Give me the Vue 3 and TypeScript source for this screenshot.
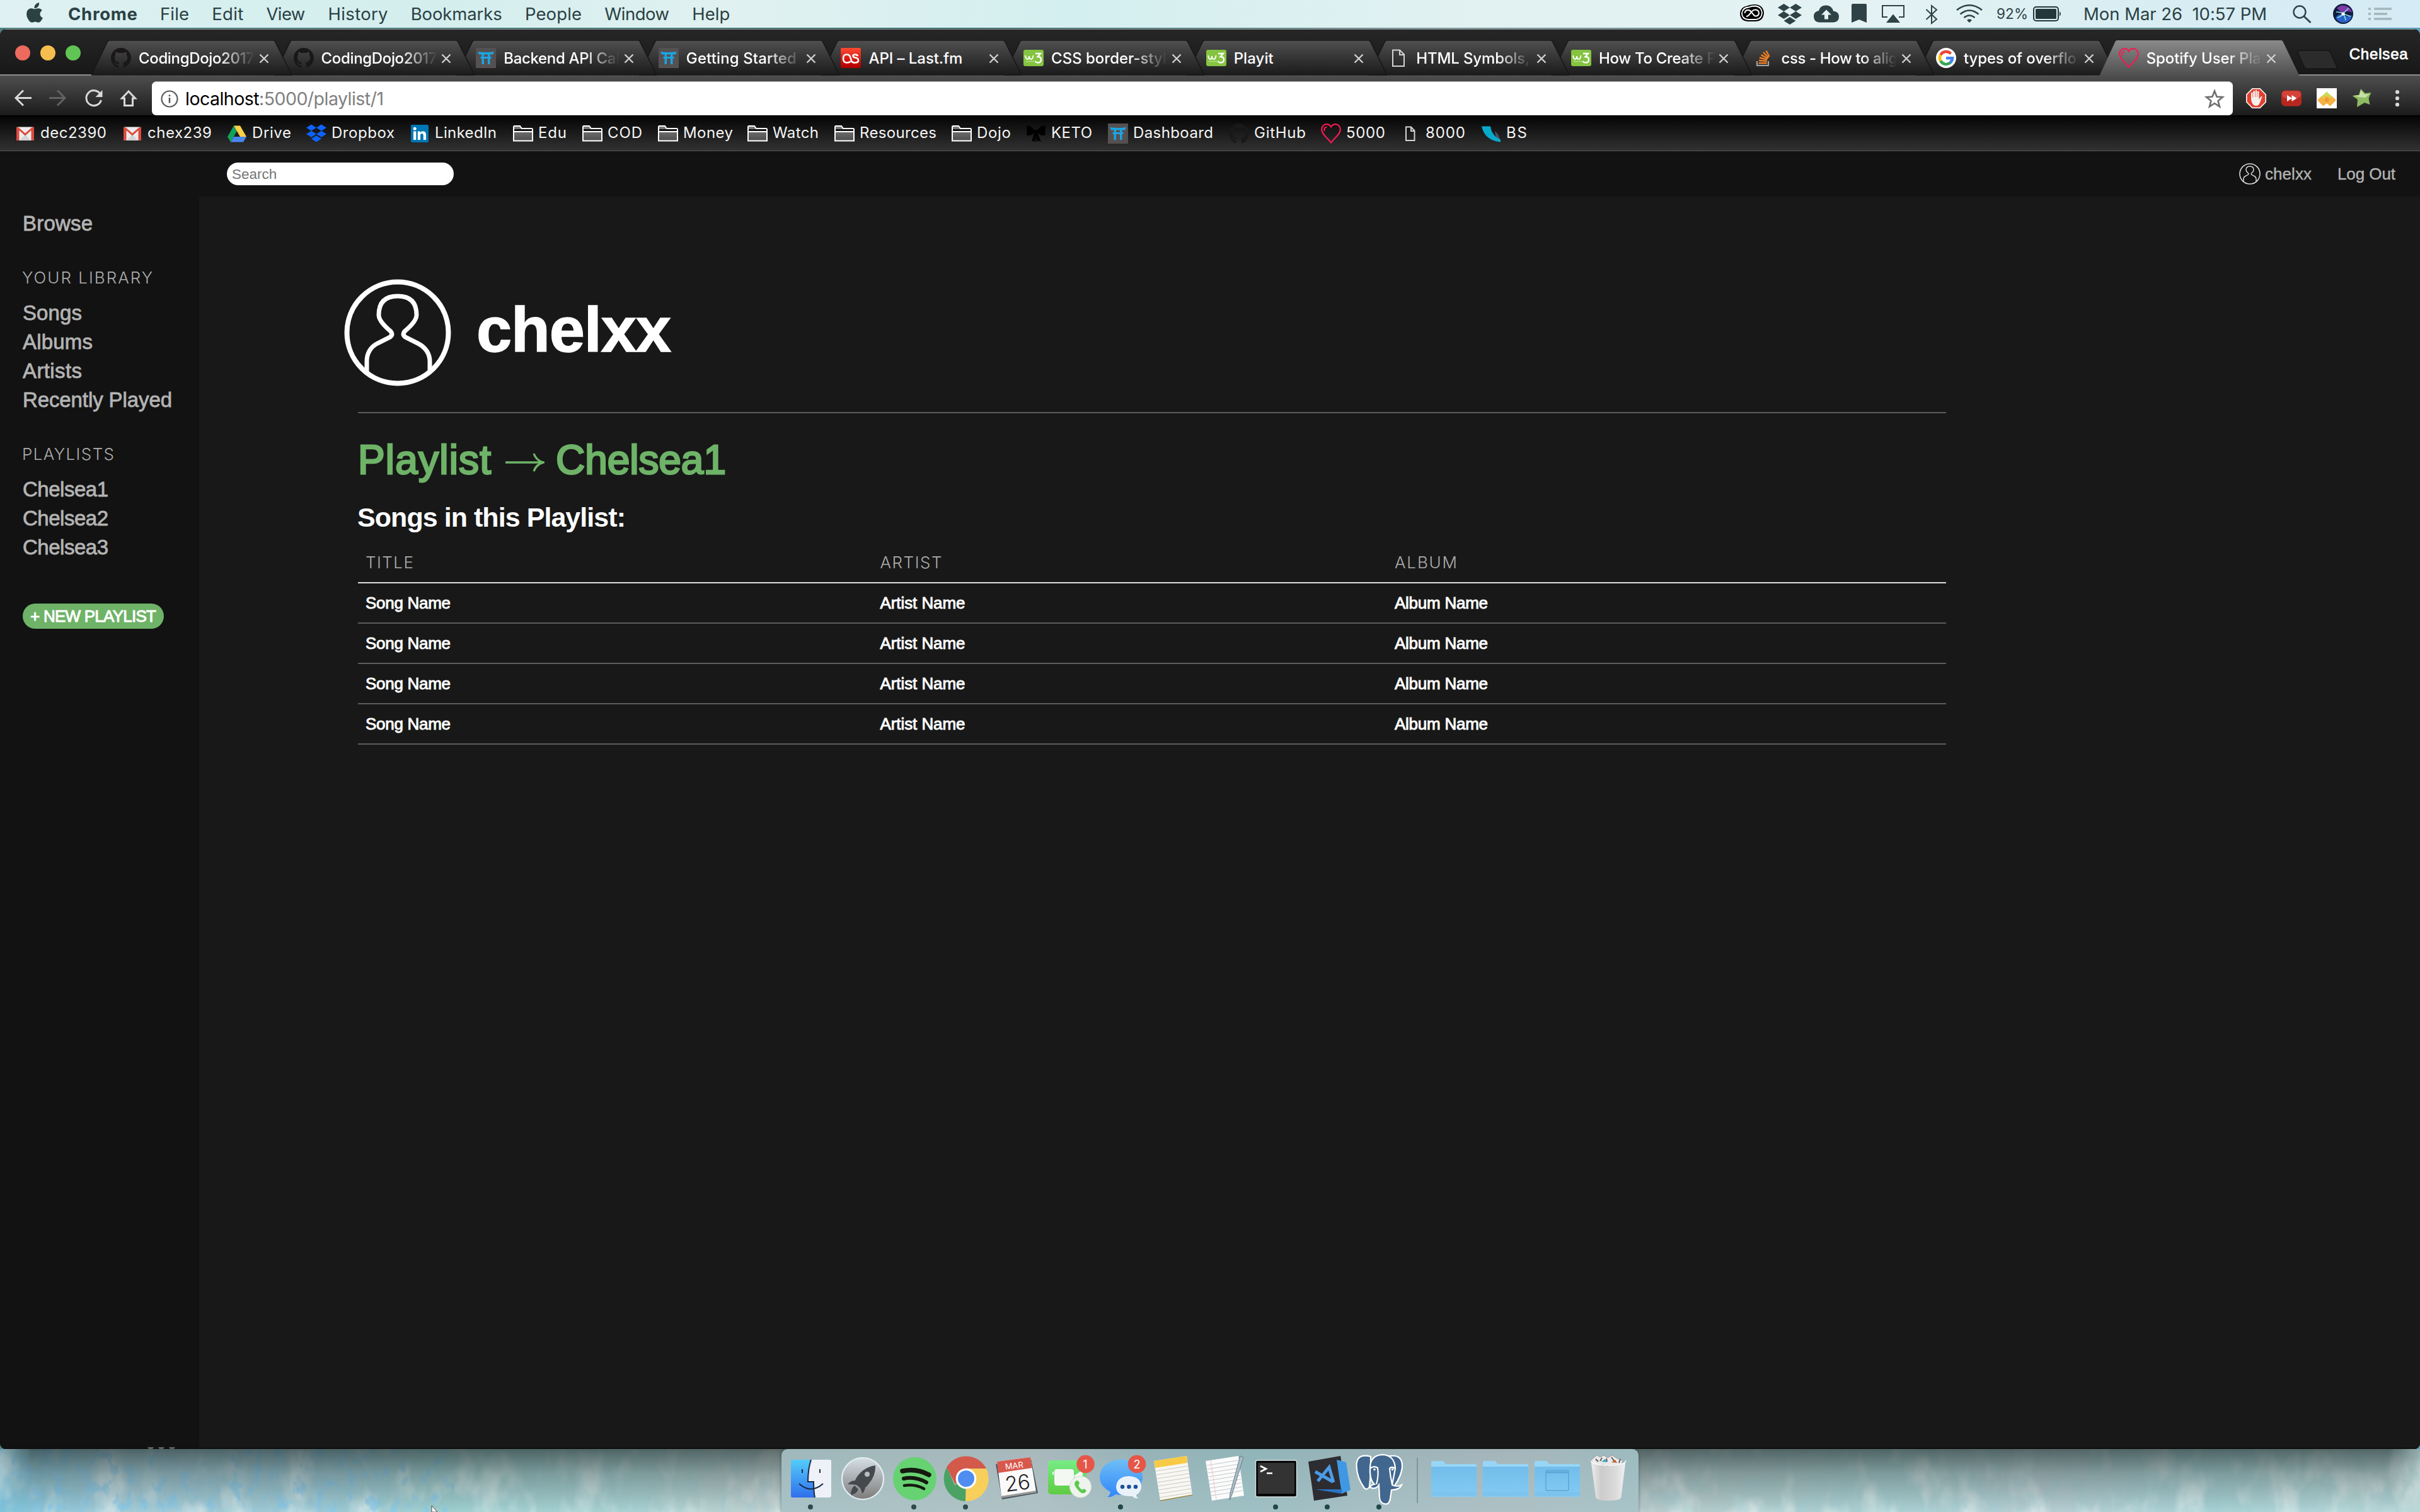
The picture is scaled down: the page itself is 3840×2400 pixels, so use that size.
<script setup lang="ts">
import type { Directive } from 'vue'

// Spreads the letters of a label so that it fills the given width.
const vFit: Directive<HTMLElement, number> = {
  mounted(el, binding) {
    el.style.letterSpacing = '0px'
    const natural = el.getBoundingClientRect().width
    const count = (el.textContent ?? '').length
    el.style.letterSpacing = `${(binding.value - natural) / Math.max(1, count - 1)}px`
    el.style.width = `${binding.value}px`
  },
}

interface Label { text: string; w: number }
interface Tab { icon: string; title: string; w: number; fade?: boolean; active?: boolean }
interface Bookmark { icon: string; text: string; w: number; pitch: number }

const menus: Label[] = [
  { text: 'File', w: 46 },
  { text: 'Edit', w: 50 },
  { text: 'View', w: 62 },
  { text: 'History', w: 95 },
  { text: 'Bookmarks', w: 145 },
  { text: 'People', w: 90 },
  { text: 'Window', w: 103 },
  { text: 'Help', w: 60 },
]

const tabs: Tab[] = [
  { icon: 'github', title: 'CodingDojo2017', w: 184, fade: true },
  { icon: 'github', title: 'CodingDojo2017', w: 184, fade: true },
  { icon: 'torii', title: 'Backend API Cal', w: 184, fade: true },
  { icon: 'torii', title: 'Getting Started', w: 175, fade: true },
  { icon: 'lastfm', title: 'API – Last.fm', w: 149 },
  { icon: 'w3', title: 'CSS border-styl', w: 183, fade: true },
  { icon: 'w3', title: 'Playit', w: 63 },
  { icon: 'page', title: 'HTML Symbols,', w: 180, fade: true },
  { icon: 'w3', title: 'How To Create P', w: 187, fade: true },
  { icon: 'stack', title: 'css - How to alig', w: 185, fade: true },
  { icon: 'google', title: 'types of overflo', w: 179, fade: true },
  { icon: 'heart', title: 'Spotify User Pla', w: 182, fade: true, active: true },
]

const bookmarks: Bookmark[] = [
  { icon: 'gmail', text: 'dec2390', w: 105, pitch: 170 },
  { icon: 'gmail', text: 'chex239', w: 102, pitch: 166 },
  { icon: 'drive', text: 'Drive', w: 62, pitch: 126 },
  { icon: 'dropbox', text: 'Dropbox', w: 100, pitch: 164 },
  { icon: 'linkedin', text: 'LinkedIn', w: 98, pitch: 164 },
  { icon: 'folder', text: 'Edu', w: 45, pitch: 110 },
  { icon: 'folder', text: 'COD', w: 55, pitch: 120 },
  { icon: 'folder', text: 'Money', w: 79, pitch: 142 },
  { icon: 'folder', text: 'Watch', w: 73, pitch: 138 },
  { icon: 'folder', text: 'Resources', w: 122, pitch: 186 },
  { icon: 'folder', text: 'Dojo', w: 54, pitch: 118 },
  { icon: 'bow', text: 'KETO', w: 65, pitch: 130 },
  { icon: 'torii', text: 'Dashboard', w: 127, pitch: 192 },
  { icon: 'githubDark', text: 'GitHub', w: 82, pitch: 146 },
  { icon: 'heart', text: '5000', w: 62, pitch: 126 },
  { icon: 'pageSmall', text: '8000', w: 63, pitch: 128 },
  { icon: 'bs', text: 'BS', w: 33, pitch: 100 },
]

const library: Label[] = [
  { text: 'Songs', w: 94 },
  { text: 'Albums', w: 111 },
  { text: 'Artists', w: 94 },
  { text: 'Recently Played', w: 237 },
]

const playlists: Label[] = [
  { text: 'Chelsea1', w: 136 },
  { text: 'Chelsea2', w: 136 },
  { text: 'Chelsea3', w: 136 },
]

const columns: Label[] = [
  { text: 'TITLE', w: 76 },
  { text: 'ARTIST', w: 98 },
  { text: 'ALBUM', w: 99 },
]

const rows: Label[][] = Array.from({ length: 4 }, () => [
  { text: 'Song Name', w: 135 },
  { text: 'Artist Name', w: 135 },
  { text: 'Album Name', w: 148 },
])
</script>

<template>
  <div class="desktop">
    <!-- shared icon shapes -->
    <svg class="defs" width="0" height="0">
      <defs>
        <linearGradient id="tabFill" x1="0" y1="0" x2="0" y2="1">
          <stop offset="0" stop-color="#505050" /><stop offset=".5" stop-color="#353535" /><stop offset="1" stop-color="#1b1b1b" />
        </linearGradient>
        <linearGradient id="tabActive" x1="0" y1="0" x2="0" y2="1">
          <stop offset="0" stop-color="#8a8a8a" /><stop offset="1" stop-color="#4e4e4e" />
        </linearGradient>
        <linearGradient id="lfm" x1="0" y1="0" x2="0" y2="1">
          <stop offset="0" stop-color="#ff4a32" /><stop offset=".75" stop-color="#c80a08" /><stop offset="1" stop-color="#a00" />
        </linearGradient>
        <linearGradient id="folderFill" x1="0" y1="0" x2="0" y2="1">
          <stop offset="0" stop-color="#7f7f7f" /><stop offset="1" stop-color="#4d4d4d" />
        </linearGradient>
        <symbol id="githubMark" viewBox="0 0 16 16">
          <path d="M8 0C3.58 0 0 3.58 0 8c0 3.54 2.29 6.53 5.47 7.59.4.07.55-.17.55-.38 0-.19-.01-.82-.01-1.49-2.01.37-2.53-.49-2.69-.94-.09-.23-.48-.94-.82-1.13-.28-.15-.68-.52-.01-.53.63-.01 1.08.58 1.23.82.72 1.21 1.87.87 2.33.66.07-.52.28-.87.51-1.07-1.78-.2-3.64-.89-3.64-3.95 0-.87.31-1.59.82-2.15-.08-.2-.36-1.02.08-2.12 0 0 .67-.21 2.2.82.64-.18 1.32-.27 2-.27s1.36.09 2 .27c1.53-1.04 2.2-.82 2.2-.82.44 1.1.16 1.92.08 2.12.51.56.82 1.27.82 2.15 0 3.07-1.87 3.75-3.65 3.95.29.25.54.73.54 1.48 0 1.07-.01 1.93-.01 2.2 0 .21.15.46.55.38A8.01 8.01 0 0 0 16 8c0-4.42-3.58-8-8-8z" />
        </symbol>
        <symbol id="github" viewBox="0 0 32 32"><use href="#githubMark" width="32" height="32" fill="#191717" /></symbol>
        <symbol id="githubDark" viewBox="0 0 32 32"><use href="#githubMark" width="32" height="32" fill="#191919" /></symbol>
        <symbol id="torii" viewBox="0 0 32 32">
          <rect width="32" height="32" fill="#555052" />
          <path d="M3 6q13 2 26 0l-2 4.500H5zM7.500 14h17v3h-17zM9.500 10h3.500v16H9.500zM19 10h3.500v16H19z" fill="#1ba5e0" />
        </symbol>
        <symbol id="lastfm" viewBox="0 0 32 32">
          <rect width="32" height="32" rx="2" fill="url(#lfm)" />
          <path d="M15.500 21.500q-2 2-5.500 2-6 0-6-6.700T10 10.500q4 0 5.500 5l1.500 5q1 3 5.800 3 5.200 0 5.200-4 0-3-4-3.700-4.500-.8-4.500-3t3.500-2.300q3 0 4 2.500" fill="none" stroke="#fff" stroke-width="2.600" />
        </symbol>
        <symbol id="w3" viewBox="0 0 32 32">
          <rect y="3" width="32" height="26" rx="3" fill="#85c441" />
          <path d="M3 12q1 6 3.500 6 2 0 2.500-5 .5 5 3 5 3 0 3.500-6" fill="none" stroke="#fff" stroke-width="1.900" />
          <path d="M19 9h8l-4.500 5q5.500 0 5.500 4.500 0 5-5 5-3 0-4.500-2.500" fill="none" stroke="#fff" stroke-width="2.300" />
          <path d="M4 21.500h13" stroke="#cfe8b0" stroke-width="1.600" stroke-dasharray="1.500 .7" />
        </symbol>
        <symbol id="page" viewBox="0 0 32 32">
          <path d="M7 3.500h11l7 7v18.500H7zM18 3.500v7.500h7" fill="none" stroke="#d4d4d4" stroke-width="2" />
        </symbol>
        <symbol id="pageSmall" viewBox="0 0 32 32">
          <path d="M9 5.500h8l5.500 6v15.500H9zM17 5.500v6.500h5.500" fill="none" stroke="#d4d4d4" stroke-width="2" />
        </symbol>
        <symbol id="stack" viewBox="0 0 32 32">
          <path d="M6 21v7h18v-7" fill="none" stroke="#a0a4a8" stroke-width="2.200" />
          <path d="M8.500 24.300h13M9 20l12.700 1.200M10 15.500l12 3.200M12.500 11l10.700 6M16 7l8.200 8.500M20.500 4.500l5 9.500" fill="none" stroke="#ef7f24" stroke-width="2.500" />
        </symbol>
        <symbol id="google" viewBox="0 0 32 32">
          <circle cx="16" cy="16" r="16" fill="#fff" />
          <g fill="none" stroke-width="4.600">
            <path d="M23.500 9.200A10 10 0 0 0 7.300 11.300" stroke="#ea4335" />
            <path d="M7.300 11.300A10 10 0 0 0 7.300 20.700" stroke="#fbbc05" />
            <path d="M7.300 20.700A10 10 0 0 0 22.500 23.600" stroke="#34a853" />
            <path d="M22.300 23.800A10 10 0 0 0 26 16.300H16" stroke="#4285f4" />
          </g>
        </symbol>
        <symbol id="heart" viewBox="0 0 32 32">
          <path d="M16 30.500C11 23 1.200 17.500 1.200 9.800 1.200 4.500 4.800 1.200 9 1.200c3.300 0 5.500 1.700 7 4.300 1.500-2.600 3.700-4.300 7-4.300 4.200 0 7.800 3.300 7.800 8.600C30.800 17.500 21 23 16 30.500zM5.500 12Q4.500 6 9.500 5.500" fill="none" stroke="#f01c53" stroke-width="2.200" />
        </symbol>
        <symbol id="gmail" viewBox="0 0 32 32">
          <rect x="2" y="5.500" width="28" height="21.500" rx="2" fill="#ececec" />
          <path d="M7 27l9-9 9 9z" fill="#d2d2d2" />
          <path d="M2 7.500v17q0 2.500 2 2.500h2.500V11L16 19.500 25.500 11v16H28q2 0 2-2.500v-17q0-2-2.500-2L16 15.500 4.500 5.500q-2.500 0-2.500 2z" fill="#dc4a3d" />
        </symbol>
        <symbol id="drive" viewBox="0 0 32 32">
          <path d="M11 3.500 1 21l5 8.500L16 12z" fill="#11a25d" />
          <path d="M11 3.500h10L31 21H21z" fill="#ffcf48" />
          <path d="M11 21h20l-5 8.500H6z" fill="#4a86f0" />
        </symbol>
        <symbol id="diamonds" viewBox="0 0 38 33">
          <path d="M9.500 0 19 6 9.500 12 0 6zM28.500 0 38 6l-9.500 6L19 6zM9.500 12 19 18l-9.500 6L0 18zM28.500 12 38 18l-9.500 6L19 18zM19 21l9.500 6L19 33l-9.500-6z" />
        </symbol>
        <symbol id="dropbox" viewBox="0 0 32 32"><use href="#diamonds" x="0" y="1.500" width="32" height="28" fill="#0d63ff" /></symbol>
        <symbol id="linkedin" viewBox="0 0 32 32">
          <rect x="2" y="2" width="28" height="28" rx="2" fill="#0077b5" />
          <path d="M6 12.500h4.300V26H6zM12.800 12.500h4v2q1.500-2.300 4.300-2.300 5 0 5 6.300V26h-4.300v-6.700q0-3.300-2.300-3.300-2.500 0-2.500 3.300V26h-4.200z" fill="#fff" /><circle cx="8.150" cy="8.200" r="2.500" fill="#fff" />
        </symbol>
        <symbol id="folder" viewBox="0 0 32 32">
          <path d="M1 27.500V5.500Q1 4 2.500 4H11l3 4h15.500Q31 8 31 9.500v18zM1 13h30" fill="url(#folderFill)" stroke="#fff" stroke-width="2" />
          <path d="M2 9h28v3H2z" fill="#111" />
        </symbol>
        <symbol id="bow" viewBox="0 0 32 32">
          <path d="M13 10Q6 2 1 4q1 8 0 14 5 3 12-3l-4 14 4-2 2 3 1-12 1 12 2-3 5 2-6-14q7 6 13 3-1-6 0-14-6-2-13 6z" fill="#000" />
        </symbol>
        <symbol id="bs" viewBox="0 0 32 32">
          <path d="M22 12q8 6 8 16-7-2-8-16z" fill="#4a4f66" />
          <path d="M1 4.500h14q2 15 16 21v4Q6 27 1 4.500z" fill="#08aacb" />
        </symbol>
        <symbol id="person" viewBox="0 0 170 170">
          <g fill="none" stroke="#fff">
            <circle cx="85" cy="85" r="80.500" stroke-width="8" />
            <path d="M36 147v-16q0-20 17-29l20-10q5-4 1-9Q55 67 55 57q0-30 30-30t30 30q0 10-19 26-4 5 1 9l20 10q19 10 19 29v16" stroke-width="7" />
          </g>
        </symbol>
      </defs>
    </svg>

    <!-- macOS menu bar -->
    <header class="menubar">
      <svg class="apple" width="28" height="44" viewBox="41 0 28 44"><path d="M62 4q.6 4.500-2 7t-5.500 2.300Q54 9.500 56.500 7T62 4zM68 28.300q-3.500 7.400-7 7.400-1.500 0-2.800-.7-2.400-1-4.700 0-1.500.7-2.800.7Q47 35.500 43.800 29q-3.300-7-.3-12.200 2.300-3.600 6-3.600 1.500 0 3.500.9 2 .8 4 0 2-.9 4-.9 3.600.1 5.900 3.200-3.400 2.300-3.400 5.800 0 4.400 4.500 6.100z" fill="#2b4144" /></svg>
      <strong v-fit="110" class="app-name">Chrome</strong>
      <nav class="menus"><span v-for="m in menus" :key="m.text" v-fit="m.w">{{ m.text }}</span></nav>
      <div class="status">
        <svg width="60" height="44" viewBox="2761 0 60 44"><path d="M2773 34q-12-1-12-13 1-10 11-11.500 5-2.500 13-2.500 13 1 14 13.500-1 13-13 13.500z" fill="#000" /><path d="M2774 31q-10-1-10-10 1-9 11-9.500 4-2 10-2 10 1 11 11-1 10-11 10.500z" fill="none" stroke="#fff" stroke-width="1.800" /><path d="M2768.500 21q.5-5 5.500-5 3 0 5 3l4 5q2 2 4 1.500 4-1 4-5-.5-5-6-5-3 0-5 2.500l-5 6q-2 2-4 2" fill="none" stroke="#fff" stroke-width="2" /></svg>
        <svg width="57" height="44"><use href="#diamonds" x="0" y="6" width="38" height="33" fill="#2f4245" /></svg>
        <svg width="60" height="44" viewBox="2878 0 60 44"><path d="M2887 35.500q-9-.5-9-9.500 0-7.500 8-9 2-8.500 11.500-8.500 9 0 11.500 9 9 1 9 9 0 8.500-9 9z" fill="#2f4245" /><path d="M2898 15.500l8 8h-5v7h-6v-7h-5z" fill="#e4f2f3" /></svg>
        <svg width="48" height="44" viewBox="2938 0 48 44"><path d="M2940 6h20q2 0 2 2v28l-12-5-12 5V8q0-2 2-2z" fill="#2f4245" /></svg>
        <svg width="69" height="44" viewBox="2986 0 69 44"><path d="M2995 27h-8V9h34v18h-8" fill="none" stroke="#2f4245" stroke-width="2" /><path d="M3004 22.500l11 13.500h-22z" fill="#2f4245" /></svg>
        <svg width="49" height="44" viewBox="3055 0 49 44"><path d="M3056.500 15l16.500 15.500-8 6.500V9l8 6.500L3056.500 31" fill="none" stroke="#2f4245" stroke-width="2" /></svg>
        <svg width="64" height="44" viewBox="3104 0 64 44"><path d="M3105 16q20-15.500 40 0M3110.500 22.500q14.500-12 29 0M3116.500 28q8.500-7 17 0" fill="none" stroke="#2f4245" stroke-width="2.600" /><path d="M3125 36l-4-4q4-3.500 8 0z" fill="#2f4245" /></svg>
        <span v-fit="50" class="battery-pct">92%</span>
        <svg class="battery" width="46" height="44" viewBox="3226 0 46 44"><rect x="3227" y="11" width="39" height="22" rx="4" fill="none" stroke="#22383b" stroke-width="2" /><rect x="3230" y="14" width="33" height="16" rx="1.500" fill="#22383b" /><path d="M3268 18q4 4 0 8z" fill="#22383b" /></svg>
        <span v-fit="291" class="clock">Mon Mar 26&nbsp; 10:57 PM</span>
        <svg class="loupe" width="64" height="44" viewBox="3638 0 64 44"><circle cx="3649" cy="19" r="9.500" fill="none" stroke="#2f4245" stroke-width="2.400" /><path d="M3656 26l10.500 10" stroke="#2f4245" stroke-width="2.800" /></svg>
        <svg width="56" height="44" viewBox="3702 0 56 44"><circle cx="3718" cy="22" r="16" fill="#111c3c" /><path d="M3706 28q5 9 14 8 11-2 12-12-8 4-14 0t-12 4z" fill="#2b62c9" /><path d="M3708 13q8-8 18-2 5 3 6 9-8-5-14 2z" fill="#7d3ba8" /><path d="M3707 19q8 0 11 3 3 3 4 10M3727 13q-5 4-9 9-3 4-9 6M3718 22l12 4" fill="none" stroke="#8fdfee" stroke-width="1.600" /><circle cx="3718" cy="22" r="2.600" fill="#fff" /></svg>
        <svg width="38" height="44" viewBox="3758 0 38 44"><path d="M3758 14h4M3767 14h28M3758 22h4M3767 22h21M3758 30h4M3767 30h28" stroke="#a3b6bb" stroke-width="3.600" /></svg>
      </div>
    </header>

    <!-- browser window -->
    <section class="window">
      <div class="tabstrip">
        <svg class="lights" width="145" height="44" viewBox="0 0 145 44"><circle cx="36" cy="22" r="12" fill="#ed6a5e" /><circle cx="76" cy="22" r="12" fill="#f5bf4f" /><circle cx="116" cy="22" r="12" fill="#61c555" /></svg>
        <div v-for="(t, i) in tabs" :key="i" class="tab" :class="{ active: t.active }" :style="{ zIndex: t.active ? 30 : 20 - i }">
          <svg class="tab-shape" width="318" height="56" viewBox="0 0 318 56"><path :d="t.active ? 'M0 57 25 3q1-3 4-3H288q3 0 4 3l26 54z' : 'M0 55 25 3q1-3 4-3H288q3 0 4 3l26 52z'" :fill="t.active ? 'url(#tabActive)' : 'url(#tabFill)'" stroke="#161616" :stroke-width="t.active ? 0 : 1.5" /></svg>
          <svg class="fav" width="32" height="32"><use :href="'#' + t.icon" width="32" height="32" /></svg>
          <div class="tab-title" :class="{ fade: t.fade }"><span v-fit="t.w">{{ t.title }}</span></div>
          <svg class="close" width="16" height="16" viewBox="0 0 16 16"><path d="M1.500 1.500l13 13M14.500 1.500l-13 13" stroke="#d0d0d0" stroke-width="2.400" /></svg>
        </div>
        <svg class="newtab" width="66" height="32" viewBox="0 0 66 32"><path d="M3 1h46q3 0 5 3l10 23q1 3-2 3H17q-3 0-5-3L2 4q-1-3 1-3z" fill="#2b2b2b" stroke="#151515" stroke-width="1.500" /></svg>
        <span v-fit="93" class="profile">Chelsea</span>
      </div>

      <div class="toolbar">
        <svg class="nav" width="241" height="64" viewBox="0 120 241 64" fill="none" stroke="#d9d9d9" stroke-width="3">
          <path d="M50 155.500H25M37 143.500l-12 12 12 12" />
          <path d="M78 155.500h25M91 143.500l12 12-12 12" stroke="#626262" />
          <path d="M159 149a12 12 0 1 0 1.500 10" /><path d="M162.500 143v11h-11z" fill="#d9d9d9" stroke="none" />
          <path d="M204 145l-10.500 11h4v11.500h13V156h4z" />
        </svg>
        <div class="omnibox">
          <svg width="28" height="28" viewBox="0 0 28 28"><circle cx="14" cy="14" r="12.500" fill="none" stroke="#5a5a5a" stroke-width="2.200" /><path d="M14 12v8.500M14 7.500v2.600" stroke="#5a5a5a" stroke-width="2.600" /></svg>
          <span v-fit="315" class="url"><b>localhost</b>:5000/playlist/1</span>
          <svg class="fave" width="32" height="32" viewBox="0 0 32 32"><path d="M16 3.500l3.500 9 9.300.6-7.200 6 2.400 9.200-8-5.300-8 5.300 2.400-9.200-7.200-6 9.300-.6z" fill="none" stroke="#6d6d6d" stroke-width="2.600" /></svg>
        </div>
        <div class="exts">
          <svg width="32" height="32" viewBox="0 0 32 32"><path d="M10 .8h12L31.200 10v12L22 31.200H10L.8 22V10z" fill="#e3402f" stroke="#fff" stroke-width="1.600" /><path d="M10 24q-2-3-2-8V8q0-1.500 1.200-1.500T10.500 8v7h.7V5.500q0-1.500 1.400-1.500T14 5.500V14h.7V4.500Q14.700 3 16 3t1.400 1.500V14h.7V6q0-1.500 1.200-1.500T20.500 6v12l2.500-4q1-1.500 2.500-.5L22 23q-2 5-6 5t-6-4z" fill="#f4f0ee" /></svg>
          <svg width="32" height="32" viewBox="0 0 32 32"><rect y="3.500" width="32" height="25" rx="6" fill="#b8271f" /><rect x="1" y="4.500" width="30" height="11" rx="5" fill="#d4433a" /><path d="M9 11l8 5-8 5zM16.500 11l8 5-8 5z" fill="#fff" /></svg>
          <svg width="32" height="32" viewBox="0 0 32 32"><path d="M0 0h32v32H0z" fill="#fff" /><path d="M16 5.500l10 9.500H6z" fill="#c5dc52" /><path d="M6 14l10-3 10 3 5 5-9.500 9.500L16 24l-5.500 4.500L1 19z" fill="#f6b244" /><path d="M16 14l4 4.500-4 4-4-4z" fill="#ee9630" /><path d="M16 12l6 4 4-2-4-3h-12l-4 3 4 2z" fill="#d9d04b" /></svg>
          <svg width="32" height="32" viewBox="0 0 32 32"><path d="M14 1l7 7 9.500-1-4 9 2 10-8.500-3L8 30l1-12L.5 12l10.500-1.500z" fill="#8fbb62" /><path d="M14 3l6 7 8-1-7 6-10-1-8-2 9-1z" fill="#c9dfa8" /></svg>
          <svg class="dots" width="8" height="32" viewBox="0 0 8 32" fill="#d9d9d9"><circle cx="4" cy="6" r="3.100" /><circle cx="4" cy="16" r="3.100" /><circle cx="4" cy="26" r="3.100" /></svg>
        </div>
      </div>

      <nav class="bookmarks">
        <div v-for="b in bookmarks" :key="b.text" class="bookmark" :style="{ width: b.pitch + 'px' }">
          <svg width="32" height="32"><use :href="'#' + b.icon" width="32" height="32" /></svg><span v-fit="b.w">{{ b.text }}</span>
        </div>
      </nav>

      <!-- playlist page -->
      <div class="page">
        <div class="topbar">
          <div class="search">Search</div>
          <div class="account">
            <svg width="34" height="34" viewBox="0 0 34 34" fill="none" stroke="#dcdcdc"><circle cx="17" cy="17" r="16" stroke-width="1.600" /><path d="M7 29.500v-4q0-4 4-5.500l3.500-2q1-1 0-2Q11 13 11 10.500 11 5 17 5t6 5.500q0 2.500-3.500 5.500-1 1 0 2l3.500 2q4 1.500 4 5.500v4" stroke-width="1.400" /></svg>
            <span v-fit="74" class="who">chelxx</span>
            <span v-fit="92" class="logout">Log Out</span>
          </div>
        </div>
        <div class="body">
          <aside class="sidebar">
            <a v-fit="111">Browse</a>
            <h6 v-fit="207">YOUR LIBRARY</h6>
            <a v-for="l in library" :key="l.text" v-fit="l.w">{{ l.text }}</a>
            <h6 v-fit="146">PLAYLISTS</h6>
            <a v-for="p in playlists" :key="p.text" v-fit="p.w">{{ p.text }}</a>
            <button class="new"><span v-fit="200">+ NEW PLAYLIST</span></button>
          </aside>
          <main class="content">
            <div class="hero">
              <svg width="170" height="170"><use href="#person" width="170" height="170" /></svg>
              <h1 v-fit="309">chelxx</h1>
            </div>
            <div class="sheet">
              <h2><span v-fit="211">Playlist</span><svg width="62" height="34" viewBox="0 0 62 34"><path d="M0 17h59M45 3q4 11 15 14-11 3-15 14" fill="none" stroke="#6eb368" stroke-width="3.400" /></svg><span v-fit="270">Chelsea1</span></h2>
              <h3 v-fit="426">Songs in this Playlist:</h3>
              <div class="row head"><div v-for="c in columns" :key="c.text"><span v-fit="c.w">{{ c.text }}</span></div></div>
              <div v-for="(r, i) in rows" :key="i" class="row"><div v-for="c in r" :key="c.text"><span v-fit="c.w">{{ c.text }}</span></div></div>
            </div>
          </main>
        </div>
        <svg class="clipped" width="50" height="3" viewBox="0 0 50 3"><path d="M1 0h10l-2 3H3zM18 0h10l-2 3h-6zM35 0h10l-2 3h-6z" fill="#5f5f5f" /></svg>
      </div>
    </section>

    <!-- wallpaper strip and dock -->
    <footer class="wall">
      <svg class="grain" width="3840" height="100">
        <filter id="wash" x="0" y="0" width="100%" height="100%"><feTurbulence type="fractalNoise" baseFrequency=".045 .03" numOctaves="4" seed="7" /><feColorMatrix values="0 0 0 0 .38  0 0 0 0 .64  0 0 0 0 .68  0 4 0 0 -1.750" /></filter>
        <filter id="blots" x="0" y="0" width="100%" height="100%"><feTurbulence type="fractalNoise" baseFrequency=".06 .04" numOctaves="3" seed="21" /><feColorMatrix values="0 0 0 0 .25  0 0 0 0 .6  0 0 0 0 .85  0 0 6 0 -3.200" /></filter>
        <filter id="mist" x="0" y="0" width="100%" height="100%"><feTurbulence type="fractalNoise" baseFrequency=".02 .012" numOctaves="3" seed="4" /><feColorMatrix values="0 0 0 0 .84  0 0 0 0 .92  0 0 0 0 .92  4 0 0 0 -1.900" /></filter>
        <rect width="3840" height="100" filter="url(#mist)" opacity=".55" />
        <rect width="3840" height="100" filter="url(#wash)" opacity=".42" />
        <rect width="720" height="100" filter="url(#blots)" opacity=".7" />
      </svg>
      <div class="shade"></div>
      <svg class="cursor" width="12" height="10" viewBox="0 0 12 10"><path d="M1 0v10h9z" fill="#fff" stroke="#222" stroke-width=".8" /></svg>
      <div class="dock">
        <!-- Finder -->
        <svg width="82" height="100" viewBox="0 0 82 100">
          <defs><linearGradient id="fd" x1="0" y1="0" x2="0" y2="1"><stop offset="0" stop-color="#54ccfb" /><stop offset="1" stop-color="#2f6fec" /></linearGradient></defs>
          <rect x="10" y="17" width="64" height="60" rx="2.500" fill="url(#fd)" /><path d="M42 17h29.500q2.500 0 2.500 2.500v55q0 2.500-2.500 2.500H48q-2-8-2-25H37q0-20 5-35z" fill="#eef2f8" />
          <path d="M28 32v6M56 32v6M23 55q19 17 38 0M42 17q-5 15-5 35h9q0 15 2 25" fill="none" stroke="#1a2a44" stroke-width="2" /><circle cx="41" cy="92" r="4" fill="#2d4b4f" />
        </svg>
        <!-- Launchpad -->
        <svg width="82" height="100" viewBox="0 0 82 100">
          <defs><linearGradient id="lp" x1="0" y1="0" x2="0" y2="1"><stop offset="0" stop-color="#d5dfe4" /><stop offset="1" stop-color="#7d7b7b" /></linearGradient></defs>
          <circle cx="42" cy="47" r="33" fill="url(#lp)" stroke="#e3eff5" stroke-width="2.200" />
          <path d="M62 26q1 16-11 30-3 4-5 5-1 6-5 10-1-5-3-9l-6-5q-6-1-14-1 5-6 12-6 2-6 8-12 10-10 24-12zM29 58l6 6q-2 7-12 9 0-10 6-15z" fill="#45484c" /><circle cx="49" cy="40" r="4" fill="#b6bcc0" />
        </svg>
        <!-- Spotify -->
        <svg width="82" height="100" viewBox="0 0 82 100">
          <circle cx="42.500" cy="47" r="34.300" fill="#66d272" /><g fill="none" stroke="#15190f" stroke-linecap="round"><path d="M23 35q22-5 42 6" stroke-width="7.500" /><path d="M25 47q18-4 36 6" stroke-width="6" /><path d="M26 58q17-3 31 5" stroke-width="4.600" /></g><circle cx="41" cy="92" r="4" fill="#2d4b4f" />
        </svg>
        <!-- Chrome -->
        <svg width="82" height="100" viewBox="0 0 82 100">
          <path d="M42 47 24 57.500 11.500 29A36 36 0 0 0 41 83l16-27z" fill="#4ba265" /><path d="M42 47 41 83A36 36 0 0 0 74 31H42z" fill="#f8cf5b" /><path d="M11 29A36 36 0 0 1 74 31H42L25 56z" fill="#d3594b" />
          <circle cx="42" cy="47" r="16.300" fill="#fff" /><circle cx="42" cy="47" r="13" fill="#4f8df0" /><circle cx="41" cy="92" r="4" fill="#2d4b4f" />
        </svg>
        <!-- Calendar -->
        <svg width="82" height="100" viewBox="0 0 82 100">
          <path d="M7 24l56-8 11 54-57 10z" fill="#46525a" /><path d="M9 20l53-7 9 54-55 8z" fill="#fafafa" /><path d="M9 20l53-7 3 17-54 8z" fill="#d8584c" /><path d="M15 75l56-9 1 3-56 9z" fill="#9b9b9b" />
          <g transform="rotate(-7 38 40)"><text x="38" y="31" text-anchor="middle" font-size="13" fill="#fff">MAR</text><text x="40" y="66" text-anchor="middle" font-size="33" font-weight="300" fill="#222">26</text></g>
        </svg>
        <!-- FaceTime -->
        <svg width="82" height="100" viewBox="0 0 82 100">
          <defs><linearGradient id="ft" x1="0" y1="0" x2="0" y2="1"><stop offset="0" stop-color="#76ec85" /><stop offset="1" stop-color="#5fcb44" /></linearGradient></defs>
          <rect x="8" y="18" width="61" height="54" rx="5" fill="url(#ft)" /><rect x="18" y="32" width="31" height="26" rx="4" fill="#f3f8f3" /><path d="M50 43l12-8v20zM16 36v5" fill="#f3f8f3" stroke="#f3f8f3" stroke-width="2" /><circle cx="59.500" cy="60" r="17" fill="#eef3ee" stroke="#d4ded4" /><path d="M51 52q4-5 7 2l-2 4q2 4 6 7l3-2q6 3 2 6-6 4-13-6-6-7-3-11z" fill="#5cc94c" />
          <circle cx="67.500" cy="24" r="14.300" fill="#e55648" /><text x="67" y="30.500" text-anchor="middle" font-size="18" fill="#fff">1</text>
        </svg>
        <!-- Messages -->
        <svg width="82" height="100" viewBox="0 0 82 100">
          <defs><linearGradient id="mg" x1="0" y1="0" x2="0" y2="1"><stop offset="0" stop-color="#6fbef6" /><stop offset="1" stop-color="#2f87fa" /></linearGradient></defs>
          <path d="M42 16.500c19 0 34 12 34 28S61 73 42 73q-5 0-9-1-5 5-13 4 5-3 5-8Q8 59 8 44.500c0-16 15-28 34-28z" fill="url(#mg)" /><path d="M54 43q20 1 20 17 0 8-8 13 0 4 4 5-7 1-10-3-26 1-26-15 1-16 20-17z" fill="#e9f2fb" /><g fill="#1e5096"><circle cx="44" cy="60" r="3.300" /><circle cx="54.500" cy="60" r="3.300" /><circle cx="65" cy="60" r="3.300" /></g>
          <circle cx="67" cy="24" r="14.300" fill="#e55648" /><text x="67" y="30.500" text-anchor="middle" font-size="18" fill="#fff">2</text><circle cx="41" cy="92" r="4" fill="#1f484c" />
        </svg>
        <!-- Notes -->
        <svg width="82" height="100" viewBox="0 0 82 100">
          <path d="M12 19l52-8 9 62-51 9z" fill="#f8f7f1" /><path d="M12 19l52-8 1 11-51 8z" fill="#f8ca45" /><path d="M15 35l51-8M16 41l51-8M17 47l51-8M18 53l51-8M18 59l51-8M19 65l51-8M20 71l51-8M21 77l51-8" stroke="#c9c9c9" /><path d="M22 82l51-9" stroke="#a08a45" stroke-width="1.500" />
        </svg>
        <!-- TextEdit -->
        <svg width="82" height="100" viewBox="0 0 82 100">
          <path d="M12 19l52-8 9 63-51 8z" fill="#fbfbfb" /><path d="M14 26l50-8M15 32l50-8M16 38l50-8M17 44l50-8M17 50l50-8M18 56l50-8M19 62l50-8M20 68l50-8M21 74l50-8" stroke="#c4c7ca" /><path d="M20 18l9 62" stroke="#f3c9c4" /><path d="M67 11l5 2-18 59-4 9 1-11z" fill="#a9bccb" stroke="#6d7a85" />
        </svg>
        <!-- Terminal -->
        <svg width="82" height="100" viewBox="0 0 82 100">
          <rect x="9.500" y="18" width="65" height="58" rx="2.500" fill="#050505" stroke="#d5dfe0" stroke-width="1.400" /><rect x="13" y="22" width="58" height="49" fill="#333" /><path d="M17 27l9 4.500-9 4.500M27 38.500h9" fill="none" stroke="#fff" stroke-width="2.600" /><circle cx="41" cy="92" r="4" fill="#1f484c" />
        </svg>
        <!-- Code editor -->
        <svg width="82" height="100" viewBox="0 0 82 100">
          <path d="M11 20l51-9 11 63-53 8z" fill="#2d2c30" /><path d="M56 17l15 4 7 44-14 6z" fill="#4098e4" /><path d="M22 64h43l-1 7z" fill="#2b74c4" /><path d="M22 36l28 16M26 51l18-22 7 24" fill="none" stroke="#4b9be6" stroke-width="5" /><circle cx="41" cy="92" r="4" fill="#1f484c" />
        </svg>
        <!-- Postgres -->
        <svg width="82" height="100" viewBox="0 0 82 100">
          <g fill="#41678f" stroke="#fff" stroke-width="2.200"><path d="M28 12Q5 6 5.500 27 6 46 18 62q4 4 8-2l2-22z" /><path d="M54 12q25-6 24 17-2 15-12 29-6 2-8-5z" /><path d="M27 30q0-20 20-21 19 1 20 22l-5 26q8 4 15 0-3 8-16 8l-2 14q-2 10-9 8-7-1-8-10l-1-20q-5 8-14 4 1-4 7-5-8-7-7-26z" /><path d="M27 31q6-5 12-1 2 12-2 26M67 31q-6-4-9 0 1 12 4 25" fill="none" /></g><circle cx="34" cy="32.500" r="1.700" fill="#fff" /><circle cx="62.500" cy="32.500" r="1.700" fill="#fff" /><circle cx="41" cy="92" r="4" fill="#1f484c" />
        </svg>
        <i class="sep"></i>
        <svg v-for="n in 3" :key="n" width="82" height="100" viewBox="0 0 82 100">
          <defs><linearGradient id="fl" x1="0" y1="0" x2="0" y2="1"><stop offset="0" stop-color="#72bdeb" /><stop offset="1" stop-color="#83cbf4" /></linearGradient></defs>
          <path d="M6 76V20.500q0-1.500 2-1.500h16q2 0 3 2l2 3h47q2 0 2 2v50z" fill="#97d6f6" /><path d="M6 28h72v46q0 2-2 2H8q-2 0-2-2z" fill="url(#fl)" /><path d="M6 70h72M6 73h72" stroke="#72b8e4" />
          <g v-if="n === 3" fill="none" stroke="#5ba8d8" stroke-width="1.600"><rect x="24" y="34" width="36" height="32" rx="1.500" /><path d="M24 37h36" stroke-width="3" /></g>
        </svg>
        <!-- Trash -->
        <svg width="82" height="100" viewBox="0 0 82 100">
          <defs><linearGradient id="tr" x1="0" y1="0" x2="1" y2="0"><stop offset="0" stop-color="#f1f1f1" /><stop offset=".3" stop-color="#cfcccc" /><stop offset=".7" stop-color="#dedbdb" /><stop offset="1" stop-color="#f5f5f5" /></linearGradient></defs>
          <path d="M14 17l9-7 5 3 6-3 6 4 7-4 8 5 9 3-2 8H17z" fill="#e9e9e9" stroke="#8c8c8c" stroke-width=".8" /><path d="M21 16l4 4M31 14l-3 5M46 13l5 7M60 16l-2 6M38 15l1 5" stroke="#5a5150" stroke-width="1.800" /><path d="M30 20l6-4 3 5z" fill="#34a6c4" /><path d="M46 21l6-4 3 5z" fill="#c4622c" />
          <path d="M13.500 19q5 6 12 6l8-2 6 5 8-4 8 1q9-1 13-6l-7 57q-1 6-20.500 6T21 76z" fill="url(#tr)" opacity=".94" /><path d="M13.500 18q0 7 27.500 8 27 0 28-8" fill="none" stroke="#fff" stroke-width="1.300" />
        </svg>
      </div>
    </footer>
  </div>
</template>

<style>
html, body { margin: 0; background: #181818; }
</style>

<style scoped>
.desktop { width: 3840px; height: 2400px; overflow: hidden; display: flex; flex-direction: column; font-family: "Inter", "Liberation Sans", sans-serif; background: linear-gradient(90deg, #4f8083, #3e6d70 40%, #7d9a9b 60%, #4f8083 90%, #5b9dbb); }
.defs { position: absolute; }
span, a, h1, h3, h6, strong { white-space: nowrap; }
[class] > svg, svg { flex: none; display: block; }

.menubar { height: 44px; flex: none; display: flex; align-items: center; padding-left: 41px; font-size: 27.500px; line-height: 44px; color: #2b4144; background: linear-gradient(90deg, #e0f1f3 0, #d6efef 380px, #d4eeee 700px, #e0f1f0 1150px, #d4eff0 1700px, #e1f1f1 2300px, #e4f2f3 3000px, #d9eef3 3350px, #d5ebf5 3840px); }
.app-name { margin-left: 39px; font-weight: 700; display: inline-block; }
.menus { display: flex; gap: 36.200px; margin-left: 36px; font-weight: 400; }
.menus span, .status span { display: inline-block; }
.status { margin-left: auto; margin-right: 44px; display: flex; align-items: center; }
.battery-pct { font-size: 22.500px; }
.battery { margin-left: 8px; }
.clock { margin-left: 34px; }
.loupe { margin-left: 41px; }

.window { height: 2254px; margin-top: 2px; flex: none; display: flex; flex-direction: column; border-radius: 10px 10px 9px 9px; overflow: hidden; background: #181818; box-sizing: border-box; }
.tabstrip { height: 74px; box-sizing: border-box; flex: none; display: flex; align-items: flex-end; border-top: 1px solid #8b8b8b; background: linear-gradient(#262626, #181818); border-bottom: 2px solid #8c8c8c; }
.lights { align-self: flex-start; margin-top: 15px; }
.tab { width: 318px; height: 54px; flex: none; margin-right: -28.400px; position: relative; display: flex; align-items: center; padding-left: 31px; box-sizing: border-box; isolation: isolate; }
.tab.active { margin-right: -5px; }
.tab-shape { position: absolute; left: 0; top: 0; z-index: -1; }
.tab .fav { margin-top: 2px; }
.tab-title { width: 188px; margin: 3px 0 0 12px; font-size: 24px; line-height: 34px; color: #fff; font-weight: 450; }
.tab-title span { display: inline-block; }
.tab-title.fade { -webkit-mask-image: linear-gradient(90deg, #000 128px, transparent 184px); mask-image: linear-gradient(90deg, #000 128px, transparent 184px); }
.close { margin-left: 2.500px; margin-top: 3px; }
.newtab { margin-bottom: 7px; }
.profile { display: inline-block; margin-left: 18px; margin-bottom: 15px; color: #fff; font: 24px/34px "Liberation Sans", Arial, sans-serif; -webkit-text-stroke: .8px #fff; }

.toolbar { height: 63px; flex: none; display: flex; background: linear-gradient(#4e4e4e, #1b1b1b); }
.nav { height: 64px; }
.omnibox { width: 3302px; height: 54px; margin-top: 9px; box-sizing: border-box; background: #fff; border-radius: 7px; border-top: 1px solid #a9a9a9; display: flex; align-items: center; padding: 0 13px 0 14px; }
.url { display: inline-block; margin-left: 11px; font-size: 28.500px; color: #808080; }
.url b { font-weight: 400; color: #000; }
.fave { margin-left: auto; }
.exts { display: flex; align-items: center; gap: 24px; margin-left: 21px; margin-top: 9px; height: 54px; }
.exts .dots { margin-left: 12px; }

.bookmarks { height: 57px; flex: none; box-sizing: border-box; display: flex; align-items: flex-start; padding: 10px 0 0 24px; border-top: 2px solid #000; border-bottom: 1px solid #555; background: linear-gradient(#050505, #323232); }
.bookmark { display: flex; align-items: flex-start; gap: 8px; flex: none; font-size: 24px; line-height: 32px; color: #f4f4f4; font-weight: 400; }
.bookmark svg { margin-top: 1px; }
.bookmark span { display: inline-block; }

.page { flex: 1; display: flex; flex-direction: column; position: relative; background: #121212; color: #b3b3b3; font-family: "Liberation Sans", Arial, sans-serif; border-bottom: 2px solid #0e0e0e; }
.topbar { height: 72px; flex: none; display: flex; align-items: flex-start; padding-top: 18px; box-sizing: border-box; }
.search { margin-left: 360px; width: 360px; height: 36px; box-sizing: border-box; border-radius: 18px; padding-left: 8px; background: #fff; color: #757575; font-size: 22.500px; line-height: 37px; }
.account { margin-left: auto; display: flex; align-items: center; height: 36px; font-size: 26px; line-height: 36px; padding-right: 39px; -webkit-text-stroke: .4px #b3b3b3; }
.account span { display: inline-block; }
.who { margin-left: 7px; }
.logout { margin-left: 41px; }
.body { flex: 1; display: flex; }
.sidebar { width: 316px; flex: none; box-sizing: border-box; padding: 20px 0 0 36px; display: flex; flex-direction: column; align-items: flex-start; }
.sidebar a { font-size: 33px; line-height: 46px; -webkit-text-stroke: .8px #b3b3b3; }
.sidebar h6 { margin: 40px 0 10px -1px; font-family: "Inter", sans-serif; font-size: 26px; line-height: 46px; font-weight: 300; color: #adadad; }
.new { margin: 66px 0 0; width: 224px; height: 40px; border: 0; border-radius: 20px; padding: 0 0 0 12px; background: #6eb368; color: #fff; font: 26px/36px "Liberation Sans", Arial, sans-serif; text-align: left; -webkit-text-stroke: 1px #fff; }
.new span { display: inline-block; }
.content { flex: 1; background: #181818; padding: 131px 0 0 230px; }
.hero { display: flex; align-items: flex-start; height: 211px; }
.hero h1 { margin: 20px 0 0 40px; font-size: 101px; line-height: 120px; font-weight: 700; color: #fff; -webkit-text-stroke: 1.500px #fff; }
.sheet { width: 2520px; margin-left: 22px; border-top: 2px solid #5c5c5c; }
.sheet h2 { margin: 34px 0 0; display: flex; align-items: center; font-size: 64px; line-height: 80px; font-weight: 400; color: #6eb368; -webkit-text-stroke: 2.800px #6eb368; }
.sheet h2 span { display: inline-block; }
.sheet h2 svg { margin: 7px 18px 0 23px; }
.sheet h3 { display: inline-block; vertical-align: top; margin: 21px 0 0 -1px; font-size: 43px; line-height: 60px; font-weight: 700; color: #fff; }
.row { display: flex; box-sizing: border-box; height: 64px; border-bottom: 2px solid #5c5c5c; padding-left: 12px; color: #fff; font-size: 26px; line-height: 62px; -webkit-text-stroke: .9px #fff; }
.row > div { width: 816.500px; }
.row span { display: inline-block; }
.row.head { height: 75px; padding-top: 26px; line-height: 32px; border-color: #dedede; font-family: "Inter", sans-serif; font-weight: 300; color: #adadad; -webkit-text-stroke: 0; }
.clipped { position: absolute; left: 233px; bottom: -2px; }

.wall { height: 100px; flex: none; position: relative; display: flex; justify-content: center; background: linear-gradient(90deg, #7fc4dc 0, #a5ccd8 200px, #9cc9d6 500px, #9fd0d0 700px, #a9d2d3 1000px, #c0d3d2 1200px, #b9cccd 2600px, #abd2d4 3000px, #b9cfd4 3240px, #a8d3d6 3500px, #bfdbdb 3840px); }
.grain, .shade { position: absolute; left: 0; top: 0; }
.shade { width: 3840px; height: 100px; background: linear-gradient(rgba(35, 48, 48, .68), rgba(60, 75, 75, .4) 40%, rgba(80, 95, 95, 0)); -webkit-mask-image: linear-gradient(90deg, rgba(0, 0, 0, .4), #000 50px, #000 3790px, rgba(0, 0, 0, .4)); mask-image: linear-gradient(90deg, rgba(0, 0, 0, .4), #000 50px, #000 3790px, rgba(0, 0, 0, .4)); }
.cursor { position: absolute; left: 684px; bottom: 0; }
.dock { position: relative; width: 1360px; height: 100px; box-sizing: border-box; padding-left: 5px; display: flex; border-radius: 10px 10px 0 0; background: linear-gradient(180deg, rgba(255, 255, 255, 0), rgba(190, 215, 218, .35)), linear-gradient(90deg, #9fb8bb, #a8b8bb 30%, #96b2b7 42%, #8fb4b8 55%, #9bb3b8 70%, #a5b5ba 85%, #9cbabe); box-shadow: 0 0 4px rgba(30, 50, 50, .5); }
.dock text { font-family: "Inter", sans-serif; }
.sep { width: 2px; height: 72px; margin: 14px 15px 0 19px; background: #7a999d; }
</style>
